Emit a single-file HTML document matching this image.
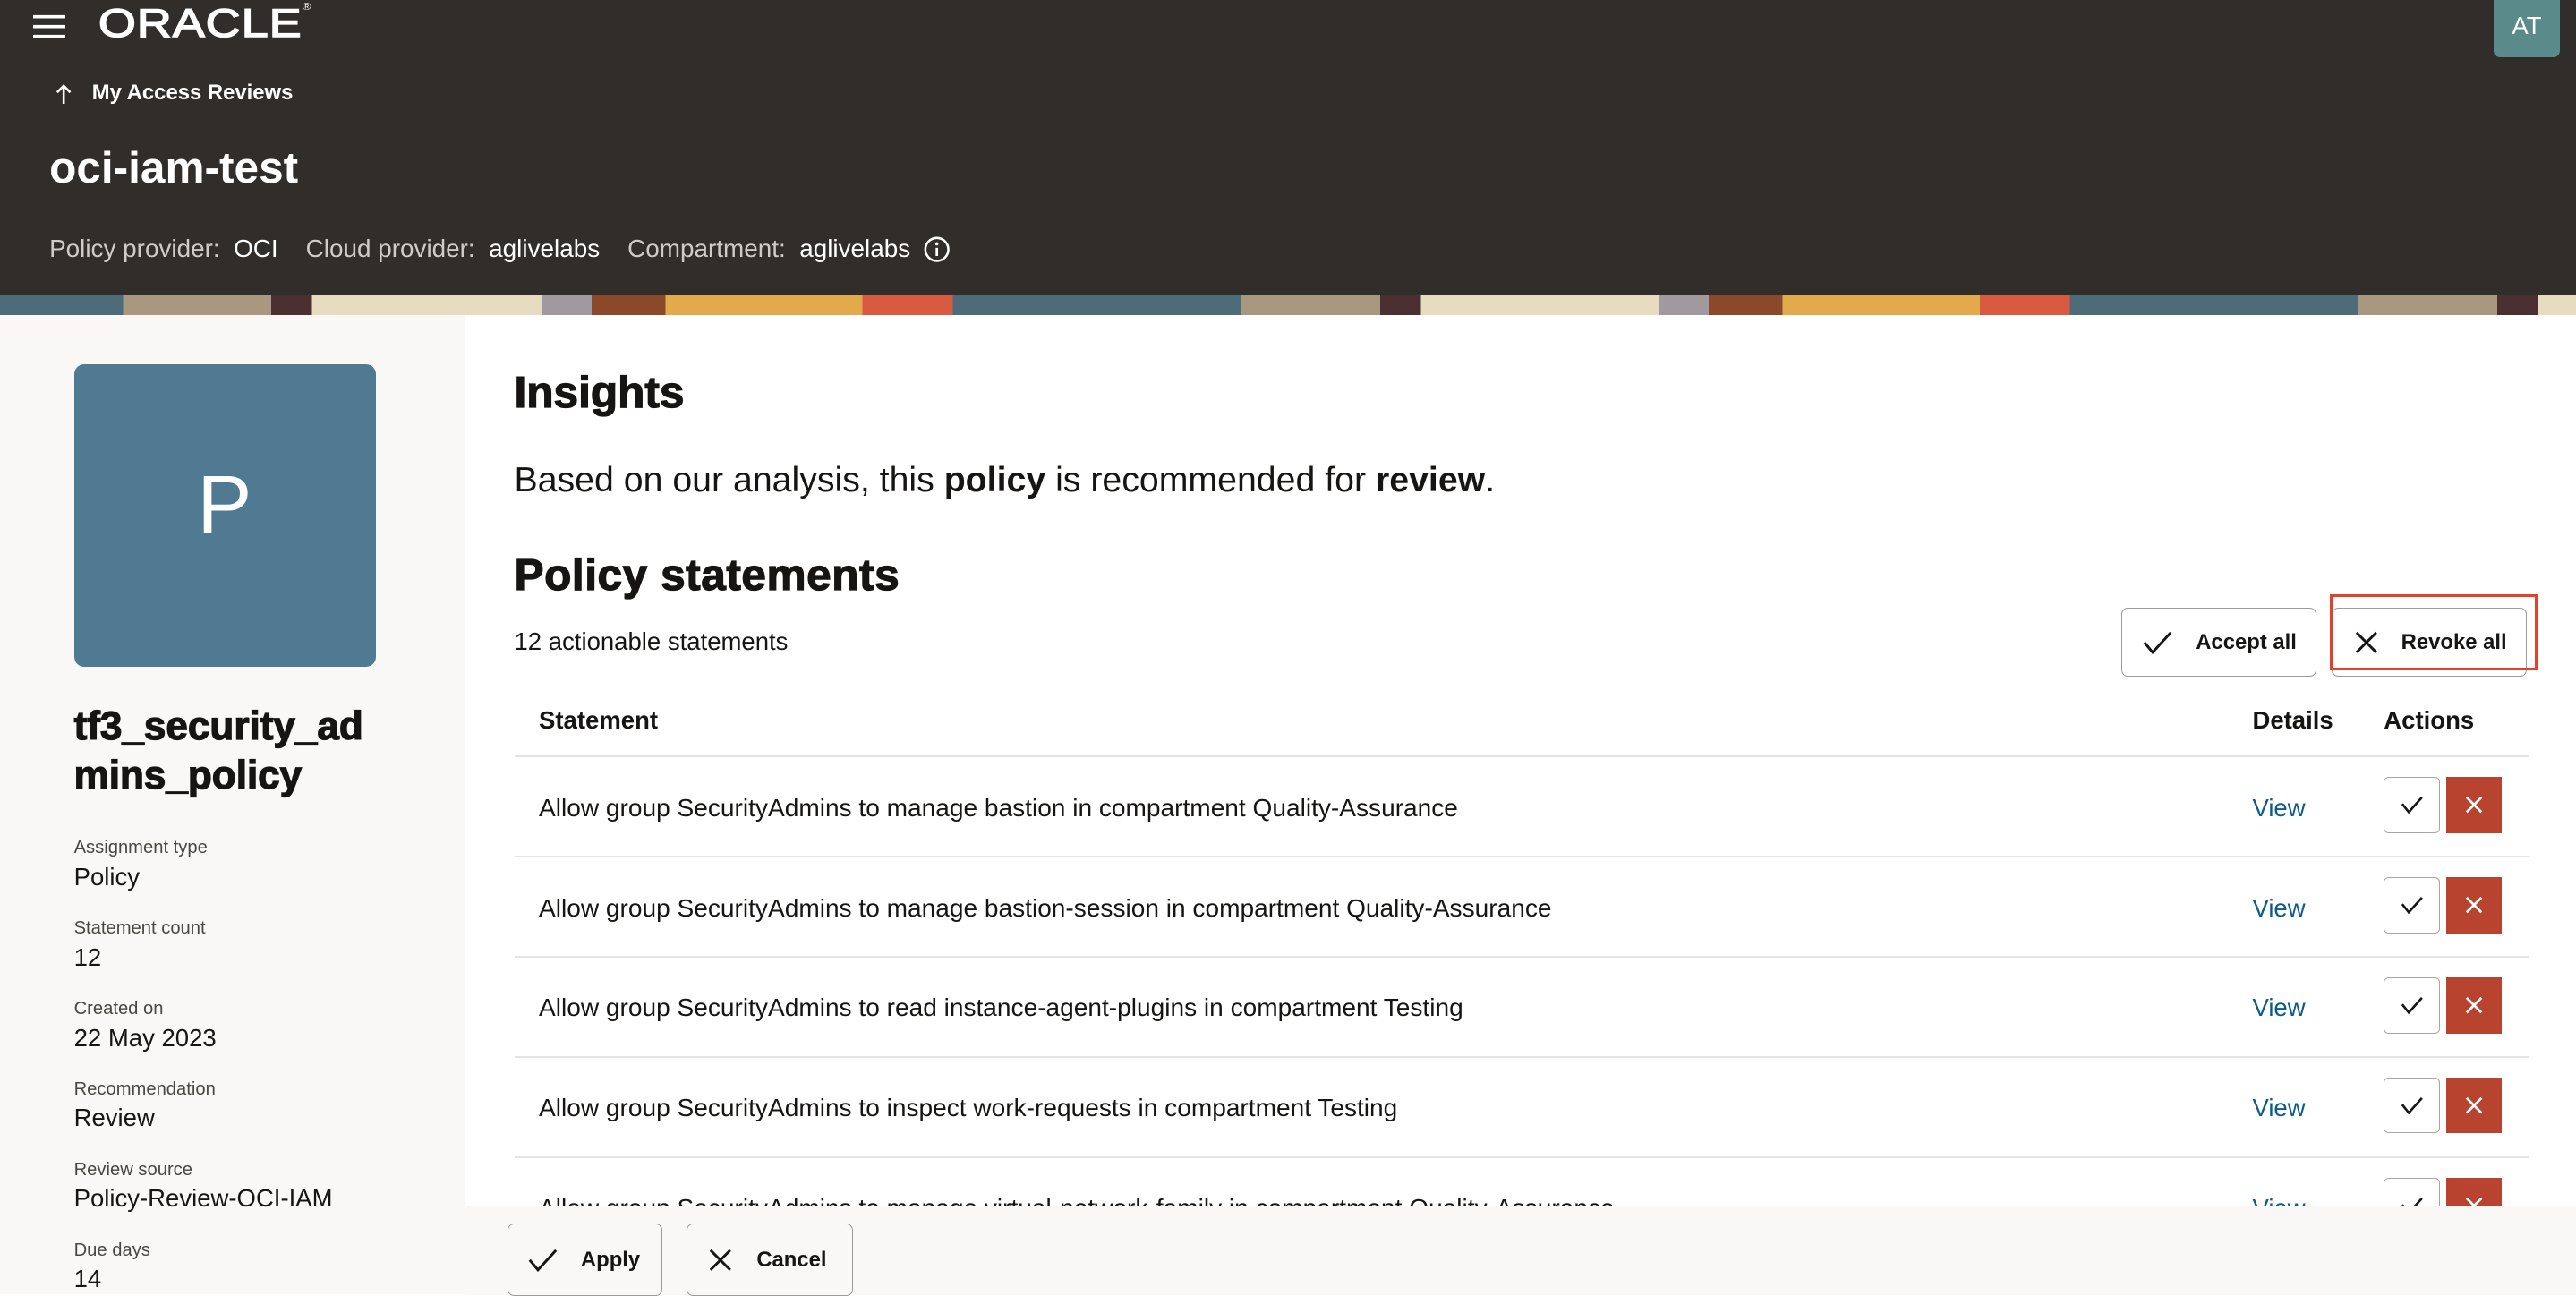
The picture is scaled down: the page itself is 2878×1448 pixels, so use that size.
<!DOCTYPE html>
<html><head><meta charset="utf-8">
<style>
html,body{margin:0;padding:0;}
body{width:1568px;height:788px;overflow:hidden;zoom:1.8355;font-family:"Liberation Sans",sans-serif;color:#161513;background:#fff;position:relative;}
.a{position:absolute;white-space:nowrap;}
.hdr{position:absolute;left:0;top:0;width:1568px;height:180px;background:#312d2a;}
.banner{position:absolute;left:0;top:180px;width:1568px;height:12px;
background:linear-gradient(90deg,#4d6b78 0,#4d6b78 75px,#a89880 75px,#a89880 165px,#4a3030 165px,#4a3030 190px,#e8dcc0 190px,#e8dcc0 330px,#a09aa0 330px,#a09aa0 360px,#8a4a2a 360px,#8a4a2a 405px,#e3aa4c 405px,#e3aa4c 525px,#d85a40 525px,#d85a40 580px,#4d6b78 580px,#4d6b78 755px,#a89880 755px,#a89880 840px,#4a3030 840px,#4a3030 865px,#e8dcc0 865px,#e8dcc0 1010px,#a09aa0 1010px,#a09aa0 1040px,#8a4a2a 1040px,#8a4a2a 1085px,#e3aa4c 1085px,#e3aa4c 1205px,#d85a40 1205px,#d85a40 1260px,#4d6b78 1260px,#4d6b78 1435px,#a89880 1435px,#a89880 1520px,#4a3030 1520px,#4a3030 1545px,#e8dcc0 1545px);}
.left{position:absolute;left:0;top:192px;width:283px;height:596px;background:#f9f8f6;}
.lbl{font-size:11px;color:#4a4743;}
.val{font-size:15px;color:#161513;}
.btn{position:absolute;border:1px solid #9e9a96;border-radius:4px;background:#fff;box-sizing:border-box;font-size:13px;font-weight:bold;display:flex;align-items:center;}
.btn svg{margin-right:14px;}
.row{position:absolute;left:313px;width:1226px;height:1px;background:#e6e4e1;}
.stmt{position:absolute;left:328px;font-size:15.3px;white-space:nowrap;}
.view{position:absolute;left:1371px;font-size:15px;color:#0d5b8a;}
.ck{position:absolute;left:1451px;width:34px;height:34px;border:1px solid #a8a4a0;border-radius:3px;box-sizing:border-box;background:#fff;display:flex;align-items:center;justify-content:center;}
.rx{position:absolute;left:1489px;width:34px;height:34px;background:#b8432f;display:flex;align-items:center;justify-content:center;}
.hv{font-weight:bold;-webkit-text-stroke:0.7px currentColor;}
</style></head><body>
<div class="hdr"></div>
<svg class="a" style="left:20px;top:8px" width="20" height="16" viewBox="0 0 20 16"><path d="M0 2h20M0 8h20M0 14h20" stroke="#fff" stroke-width="2"/></svg>
<div class="a" style="left:60px;top:1px;font-size:24px;color:#fff;letter-spacing:0.5px;-webkit-text-stroke:0.8px #fff;transform:scaleX(1.22);transform-origin:left;">ORACLE<span style="font-size:6px;vertical-align:top;-webkit-text-stroke:0">®</span></div>
<div class="a" style="left:1518px;top:0;width:40px;height:35px;background:#5b8a8a;color:#fff;font-size:15px;text-align:center;line-height:32px;border-radius:0 0 4px 4px;">AT</div>
<svg class="a" style="left:34px;top:51px" width="10" height="13" viewBox="0 0 10 13"><path d="M5 12V1M1 5l4-4 4 4" stroke="#fff" stroke-width="1.4" fill="none"/></svg>
<div class="a" style="left:56px;top:49px;font-size:13px;font-weight:bold;color:#fff;">My Access Reviews</div>
<div class="a" style="left:30px;top:86px;font-size:27px;font-weight:bold;color:#fff;">oci-iam-test</div>
<div class="a" style="left:30px;top:143px;font-size:15.2px;color:#cfccc8;">Policy provider:&nbsp; <span style="color:#fff">OCI</span>&nbsp;&nbsp;&nbsp; Cloud provider:&nbsp; <span style="color:#fff">aglivelabs</span>&nbsp;&nbsp;&nbsp; Compartment:&nbsp; <span style="color:#fff">aglivelabs</span></div>
<svg class="a" style="left:562px;top:144px" width="16" height="16" viewBox="0 0 16 16"><circle cx="8" cy="8" r="7" stroke="#fff" stroke-width="1.4" fill="none"/><path d="M8 7v5" stroke="#fff" stroke-width="1.5"/><circle cx="8" cy="4.6" r="1" fill="#fff"/></svg>
<div class="banner"></div>
<div class="left"></div>
<div class="a" style="left:45px;top:222px;width:184px;height:184px;background:#4f7a92;border-radius:6px;"></div>
<div class="a" style="left:120px;top:279px;font-size:50px;color:#fff;font-weight:100;">P</div>
<div class="a hv" style="left:45px;top:427px;font-size:24px;line-height:30px;white-space:normal;width:220px;">tf3_security_ad<br>mins_policy</div>
<div class="a lbl" style="left:45px;top:510px">Assignment type</div><div class="a val" style="left:45px;top:525px">Policy</div>
<div class="a lbl" style="left:45px;top:559px">Statement count</div><div class="a val" style="left:45px;top:574px">12</div>
<div class="a lbl" style="left:45px;top:608px">Created on</div><div class="a val" style="left:45px;top:623px">22 May 2023</div>
<div class="a lbl" style="left:45px;top:657px">Recommendation</div><div class="a val" style="left:45px;top:672px">Review</div>
<div class="a lbl" style="left:45px;top:706px">Review source</div><div class="a val" style="left:45px;top:721px">Policy-Review-OCI-IAM</div>
<div class="a lbl" style="left:45px;top:755px">Due days</div><div class="a val" style="left:45px;top:770px">14</div>

<div class="a hv" style="left:313px;top:223px;font-size:27px;">Insights</div>
<div class="a" style="left:313px;top:280px;font-size:21.4px;">Based on our analysis, this <b>policy</b> is recommended for <b>review</b>.</div>
<div class="a hv" style="left:313px;top:334px;font-size:27px;letter-spacing:0.3px;">Policy statements</div>
<div class="a" style="left:313px;top:382px;font-size:15px;">12 actionable statements</div>
<div class="btn" style="left:1291px;top:370px;width:119px;height:42px;padding-left:13px;"><svg width="18" height="14" viewBox="0 0 18 14"><path d="M1 7l5 6L17 1" stroke="#161513" stroke-width="1.6" fill="none"/></svg>Accept all</div>
<div class="btn" style="left:1419px;top:370px;width:119px;height:42px;padding-left:14px;"><svg width="14" height="14" viewBox="0 0 14 14" style="margin-right:14px"><path d="M1 1l12 12M13 1L1 13" stroke="#161513" stroke-width="1.6"/></svg>Revoke all</div>
<div class="a" style="left:1418px;top:362px;width:123px;height:43px;border:2px solid #e5402a;"></div>
<div class="a" style="left:328px;top:430px;font-size:15px;font-weight:bold;">Statement</div>
<div class="a" style="left:1371px;top:430px;font-size:15px;font-weight:bold;">Details</div>
<div class="a" style="left:1451px;top:430px;font-size:15px;font-weight:bold;">Actions</div>
<div class="row" style="top:460px"></div><div class="row" style="top:521px"></div><div class="row" style="top:582px"></div><div class="row" style="top:643px"></div><div class="row" style="top:704px"></div>

<div class="stmt" style="top:483px">Allow group SecurityAdmins to manage bastion in compartment Quality-Assurance</div>
<div class="stmt" style="top:544px">Allow group SecurityAdmins to manage bastion-session in compartment Quality-Assurance</div>
<div class="stmt" style="top:605px">Allow group SecurityAdmins to read instance-agent-plugins in compartment Testing</div>
<div class="stmt" style="top:666px">Allow group SecurityAdmins to inspect work-requests in compartment Testing</div>
<div class="stmt" style="top:727px">Allow group SecurityAdmins to manage virtual-network-family in compartment Quality-Assurance</div>
<div class="view" style="top:483px">View</div><div class="view" style="top:544px">View</div><div class="view" style="top:605px">View</div><div class="view" style="top:666px">View</div><div class="view" style="top:727px">View</div>

<div class="ck" style="top:473px"><svg width="14" height="11" viewBox="0 0 14 11"><path d="M1 5l4 5 8-9" stroke="#161513" stroke-width="1.4" fill="none"/></svg></div>
<div class="rx" style="top:473px"><svg width="11" height="11" viewBox="0 0 11 11"><path d="M1 1l9 9M10 1l-9 9" stroke="#fff" stroke-width="1.5"/></svg></div>
<div class="ck" style="top:534px"><svg width="14" height="11" viewBox="0 0 14 11"><path d="M1 5l4 5 8-9" stroke="#161513" stroke-width="1.4" fill="none"/></svg></div>
<div class="rx" style="top:534px"><svg width="11" height="11" viewBox="0 0 11 11"><path d="M1 1l9 9M10 1l-9 9" stroke="#fff" stroke-width="1.5"/></svg></div>
<div class="ck" style="top:595px"><svg width="14" height="11" viewBox="0 0 14 11"><path d="M1 5l4 5 8-9" stroke="#161513" stroke-width="1.4" fill="none"/></svg></div>
<div class="rx" style="top:595px"><svg width="11" height="11" viewBox="0 0 11 11"><path d="M1 1l9 9M10 1l-9 9" stroke="#fff" stroke-width="1.5"/></svg></div>
<div class="ck" style="top:656px"><svg width="14" height="11" viewBox="0 0 14 11"><path d="M1 5l4 5 8-9" stroke="#161513" stroke-width="1.4" fill="none"/></svg></div>
<div class="rx" style="top:656px"><svg width="11" height="11" viewBox="0 0 11 11"><path d="M1 1l9 9M10 1l-9 9" stroke="#fff" stroke-width="1.5"/></svg></div>
<div class="ck" style="top:717px"><svg width="14" height="11" viewBox="0 0 14 11"><path d="M1 5l4 5 8-9" stroke="#161513" stroke-width="1.4" fill="none"/></svg></div>
<div class="rx" style="top:717px"><svg width="11" height="11" viewBox="0 0 11 11"><path d="M1 1l9 9M10 1l-9 9" stroke="#fff" stroke-width="1.5"/></svg></div>

<div class="a" style="left:283px;top:734px;width:1285px;height:54px;background:#f9f8f6;border-top:1px solid #d6d3cf;"></div>
<div class="btn" style="left:309px;top:745px;width:94px;height:44px;padding-left:12px;background:#f9f8f6;"><svg width="18" height="14" viewBox="0 0 18 14"><path d="M1 7l5 6L17 1" stroke="#161513" stroke-width="1.6" fill="none"/></svg>Apply</div>
<div class="btn" style="left:418px;top:745px;width:101px;height:44px;padding-left:13px;background:#f9f8f6;"><svg width="14" height="14" viewBox="0 0 14 14" style="margin-right:15px"><path d="M1 1l12 12M13 1L1 13" stroke="#161513" stroke-width="1.6"/></svg>Cancel</div>
</body></html>
